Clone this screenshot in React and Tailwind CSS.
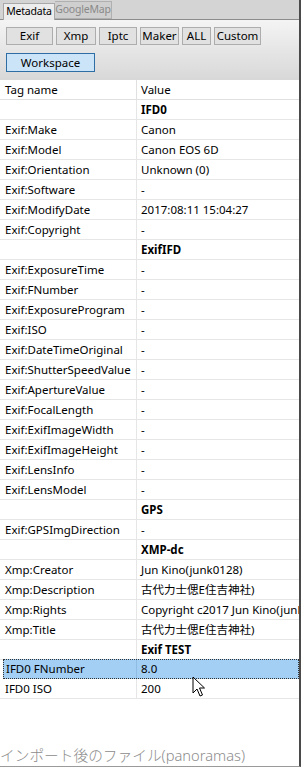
import { Fragment } from 'react'

const FONT = { fontFamily: '"Noto Sans", "Noto Sans CJK JP", sans-serif' }

const rows = [
  ['', 'IFD0', true],
  ['Exif:Make', 'Canon'],
  ['Exif:Model', 'Canon EOS 6D'],
  ['Exif:Orientation', 'Unknown (0)'],
  ['Exif:Software', '-'],
  ['Exif:ModifyDate', '2017:08:11 15:04:27'],
  ['Exif:Copyright', '-'],
  ['', 'ExifIFD', true],
  ['Exif:ExposureTime', '-'],
  ['Exif:FNumber', '-'],
  ['Exif:ExposureProgram', '-'],
  ['Exif:ISO', '-'],
  ['Exif:DateTimeOriginal', '-'],
  ['Exif:ShutterSpeedValue', '-'],
  ['Exif:ApertureValue', '-'],
  ['Exif:FocalLength', '-'],
  ['Exif:ExifImageWidth', '-'],
  ['Exif:ExifImageHeight', '-'],
  ['Exif:LensInfo', '-'],
  ['Exif:LensModel', '-'],
  ['', 'GPS', true],
  ['Exif:GPSImgDirection', '-'],
  ['', 'XMP-dc', true],
  ['Xmp:Creator', 'Jun Kino(junk0128)'],
  ['Xmp:Description', '古代力士偲E住吉神社)'],
  ['Xmp:Rights', 'Copyright c2017 Jun Kino(junk0128)'],
  ['Xmp:Title', '古代力士偲E住吉神社)'],
  ['', 'Exif TEST', true],
  ['IFD0 FNumber', '8.0', false, true],
  ['IFD0 ISO', '200'],
]

const buttons = [
  ['Exif', 'w-[47px]'],
  ['Xmp', 'w-[40px]'],
  ['Iptc', 'w-[38px]'],
  ['Maker', 'w-[39px]'],
  ['ALL', 'w-[29px]'],
  ['Custom', 'w-[47px]'],
]

function Row({ tag, value, bold, selected }) {
  if (selected) {
    return (
      <div className="flex h-[20px] items-center bg-[#a3cff5] border border-dotted border-[#333] ml-[3px] -mt-px">
        <div className="w-[133px] shrink-0 pl-[2px] h-full flex items-center border-r border-[#8fbce3]">{tag}</div>
        <div className="pl-[4px] whitespace-nowrap">{value}</div>
      </div>
    )
  }
  return (
    <div className="flex h-[20px] items-center border-b border-[#e6e6e6]">
      <div className="w-[137px] shrink-0 pl-[5px] h-full flex items-center border-r border-[#e6e6e6] whitespace-nowrap">{tag}</div>
      <div className={`pl-[4px] whitespace-nowrap ${bold ? 'font-bold' : ''}`}>{value}</div>
    </div>
  )
}

export default function App() {
  return (
    <div className="relative w-[304px] h-[770px] overflow-hidden bg-white text-[11.5px] text-black" style={FONT}>
      <div className="flex flex-col w-[301px] h-[767px] border-r-2 border-b border-r-[#4a4a4a] border-b-[#9a9a9a] overflow-hidden">
        <div className="h-[20px] bg-[#d4d4d4] border-b border-[#8c8c8c] flex items-start shrink-0 text-[10.5px] tracking-[-0.2px]">
          <div className="ml-[3px] mt-[3px] w-[52px] h-[17px] bg-[#ededed] border border-b-0 border-[#a8a8a8] flex items-center justify-center">Metadata</div>
          <div className="mt-[1px] w-[57px] h-[18px] bg-[#cfcfcf] border border-l-0 border-[#b0b0b0] flex items-center justify-center text-[#8a8a8a]">GoogleMap</div>
        </div>
        <div className="h-[60px] shrink-0 bg-gradient-to-b from-[#f4f4f4] to-[#d8d8d8] px-[6px] pt-[7px]">
          <div className="flex gap-[3px]">
            {buttons.map(([b, w]) => (
              <div key={b} className={`${w} h-[18px] bg-[#e1e1e1] border border-[#adadad] flex items-center justify-center`}>{b}</div>
            ))}
          </div>
          <div className="mt-[8px] w-[89px] h-[19px] bg-[#cce4f7] border border-[#2f6ea5] flex items-center justify-center">Workspace</div>
        </div>
        <div className="flex-1 bg-white">
          <div className="flex h-[20px] items-center border-b border-[#e0e0e0]">
            <div className="w-[137px] shrink-0 pl-[5px] h-full flex items-center border-r border-[#e0e0e0]">Tag name</div>
            <div className="pl-[4px]">Value</div>
          </div>
          {rows.map(([t, v, b, s], i) => (
            <Fragment key={i}>
              <Row tag={t} value={v} bold={b} selected={s} />
            </Fragment>
          ))}
        </div>
      </div>
      <div className="absolute left-0 top-[745px] text-[14.7px] font-light text-[#8c8c8c] whitespace-nowrap leading-[20px]">インポート後のファイル(panoramas)</div>
      <svg className="absolute left-[192px] top-[676px]" width="14" height="22" viewBox="0 0 14 22">
        <path d="M1 1 L1 17 L5 13 L8 20 L10.5 19 L7.5 12 L12.5 12 Z" fill="#fff" stroke="#000" strokeWidth="1" strokeLinejoin="miter" />
      </svg>
    </div>
  )
}
